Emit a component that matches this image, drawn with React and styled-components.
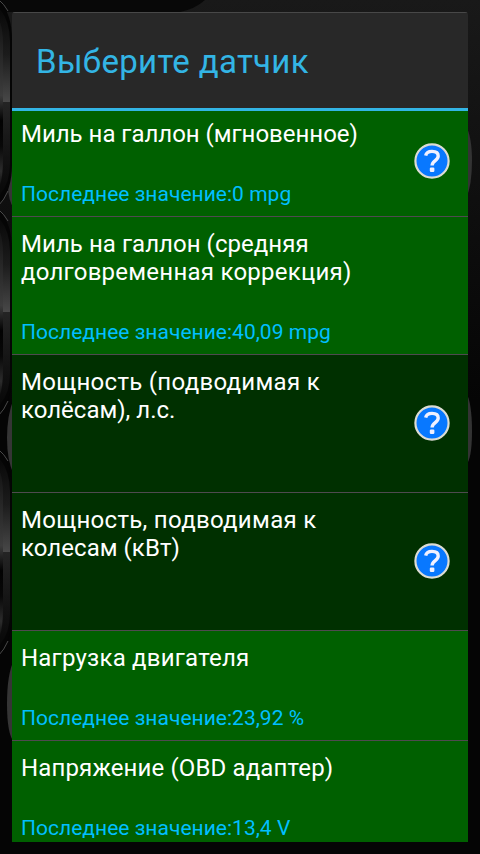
import React from 'react'
import styled, { createGlobalStyle } from 'styled-components'

const GlobalStyle = createGlobalStyle`
  * {
    box-sizing: border-box;
  }

  body {
    margin: 0;
    background: #050505;
    font-family: Roboto, 'Noto Sans', sans-serif;
    overflow: hidden;
  }
`

const Screen = styled.div`
  position: relative;
  width: 480px;
  height: 854px;
  padding: 12px;
  overflow: hidden;
`

const Backdrop = styled.svg`
  position: absolute;
  top: 0;
  left: 0;
`

const Dialog = styled.section`
  position: relative;
  display: flex;
  flex-direction: column;
  height: 830px;
  border-radius: 3px 3px 0 0;
  overflow: hidden;
`

const Header = styled.header`
  display: flex;
  align-items: center;
  flex: 0 0 99px;
  padding: 2px 24px 0;
  background: #282828;
  border-top: 1px solid #484848;
  border-bottom: 3px solid #33b5e5;
`

const Title = styled.h1`
  margin: 0;
  font-size: 33px;
  font-weight: 400;
  line-height: 40px;
  letter-spacing: 0.32px;
  color: #33b5e5;
  white-space: nowrap;
`

const List = styled.ul`
  flex: 1;
  min-height: 0;
  margin: 0;
  padding: 0;
  list-style: none;
  overflow: hidden;
`

const Row = styled.li`
  display: flex;
  align-items: center;
  height: ${(props) => (props.$tall ? '138px' : '110px')};
  padding: 13px 18px 0 9px;
  background: ${(props) => (props.$active ? '#006000' : '#003000')};
  border-bottom: 1px solid #4f4a4f;

  &:first-child {
    margin-top: -4px;
  }
`

const Sensor = styled.div`
  display: flex;
  flex-direction: column;
  justify-content: space-between;
  align-self: stretch;
  flex: 1;
  padding-bottom: 9px;
`

const NameLine = styled.div`
  font-size: 24px;
  line-height: 28px;
  letter-spacing: ${(props) => props.$spacing}px;
  color: #fff;
  white-space: nowrap;
`

const LastValue = styled.div`
  font-size: 21px;
  line-height: 26px;
  letter-spacing: 0.02px;
  color: #00bfff;
  white-space: nowrap;
`

const HelpButton = styled.button`
  display: flex;
  width: 36px;
  height: 36px;
  margin: 0 0 15px;
  padding: 0;
  background: none;
  border: 0;
`

const HelpIcon = () => (
  <svg width="36" height="36" viewBox="0 0 36 36">
    <circle cx="18" cy="18" r="16.6" fill="#0878ff" stroke="#dcdcd4" strokeWidth="2.2" />
    <path
      d="M11.7 12.6C12.2 9.8 14.6 8.4 18 8.4c3.7 0 6.2 1.7 6.2 4.7 0 4.6-6.1 4.5-6.1 9.5"
      fill="none"
      stroke="#f0f0ff"
      strokeWidth="3.4"
    />
    <rect x="15.8" y="24.6" width="4.6" height="4.4" rx="1.2" fill="#f0f0ff" />
  </svg>
)

// Dimmed dashboard with its gauge rims showing around the dialog
const Dashboard = () => (
  <Backdrop width="480" height="854" viewBox="0 0 480 854">
    <defs>
      <linearGradient id="top" x1="0" y1="0" x2="0" y2="1">
        <stop offset="0" stopColor="#191919" />
        <stop offset="1" stopColor="#050505" />
      </linearGradient>
      <linearGradient id="bezel" x1="0" y1="0" x2="0" y2="1">
        <stop offset="0" stopColor="#080808" />
        <stop offset="0.25" stopColor="#1c1c1c" />
        <stop offset="0.499" stopColor="#484848" />
        <stop offset="0.5" stopColor="#242424" />
        <stop offset="0.8" stopColor="#121212" />
        <stop offset="1" stopColor="#080808" />
      </linearGradient>
      <linearGradient id="face" x1="0" y1="0" x2="0" y2="1">
        <stop offset="0" stopColor="#141414" />
        <stop offset="0.45" stopColor="#3c3c3c" />
        <stop offset="0.6" stopColor="#020202" />
        <stop offset="0.75" stopColor="#080808" />
        <stop offset="0.9" stopColor="#2c2c2c" />
        <stop offset="1" stopColor="#0c0c0c" />
      </linearGradient>
    </defs>
    <rect width="480" height="400" fill="url(#top)" />
    <path d="M0 0H205Q195 9 180 12H0Z" fill="#080808" />
    <path d="M14 128Q8 148 8 185Q8 200 14 209Z" fill="#353535" />
    <path d="M14 398Q7 415 7 438T14 475Z" fill="#353535" />
    <path d="M14 660Q7 674 7 704T14 742Z" fill="#353535" />
    <path d="M466 126Q472 137 472 161T466 199Z" fill="#333" />
    <path d="M466 392Q472 403 472 431T466 465Z" fill="#333" />
    {[0, 210, 450].map((y) => (
      <g key={y}>
        <path
          d={`M-1 ${y}Q12 ${y + 14} 12 ${y + 40}V${y + 165}Q12 ${y + 190} -1 ${y + 205}Z`}
          fill="#050505"
        />
        <path
          d={`M-1 ${y + 8}Q10 ${y + 20} 10 ${y + 42}V${y + 163}Q10 ${y + 184} -1 ${y + 196}Z`}
          fill="url(#bezel)"
        />
        <path
          d={`M-1 ${y + 20}Q3 ${y + 28} 3 ${y + 45}V${y + 160}Q3 ${y + 178} -1 ${y + 188}Z`}
          fill="url(#face)"
        />
        <path
          d={`M-1 ${y}Q4 ${y + 4} 8 ${y + 11}M-1 ${y + 205}Q4 ${y + 200} 8 ${y + 191}`}
          fill="none"
          stroke="#4a4a4a"
        />
      </g>
    ))}
  </Backdrop>
)

const sensors = [
  {
    lines: [{ text: 'Миль на галлон (мгновенное)', spacing: -0.02 }],
    value: '0 mpg',
    help: true,
  },
  {
    lines: [
      { text: 'Миль на галлон (средняя', spacing: 0.05 },
      { text: 'долговременная коррекция)', spacing: 0.25 },
    ],
    value: '40,09 mpg',
  },
  {
    lines: [
      { text: 'Мощность (подводимая к', spacing: 0.3 },
      { text: 'колёсам), л.с.', spacing: 0 },
    ],
    help: true,
  },
  {
    lines: [
      { text: 'Мощность, подводимая к', spacing: 0.3 },
      { text: 'колесам (кВт)', spacing: 0.05 },
    ],
    help: true,
  },
  {
    lines: [{ text: 'Нагрузка двигателя', spacing: 0.22 }],
    value: '23,92 %',
  },
  {
    lines: [{ text: 'Напряжение (OBD адаптер)', spacing: 0.14 }],
    value: '13,4 V',
  },
]

const App = () => (
  <>
    <GlobalStyle />
    <Screen>
      <Dashboard />
      <Dialog>
        <Header>
          <Title>Выберите датчик</Title>
        </Header>
        <List>
          {sensors.map((sensor) => (
            <Row
              key={sensor.lines[0].text}
              $tall={sensor.lines.length > 1}
              $active={Boolean(sensor.value)}
            >
              <Sensor>
                <div>
                  {sensor.lines.map((line) => (
                    <NameLine key={line.text} $spacing={line.spacing}>
                      {line.text}
                    </NameLine>
                  ))}
                </div>
                {sensor.value && (
                  <LastValue>Последнее значение:{sensor.value}</LastValue>
                )}
              </Sensor>
              {sensor.help && (
                <HelpButton>
                  <HelpIcon />
                </HelpButton>
              )}
            </Row>
          ))}
        </List>
      </Dialog>
    </Screen>
  </>
)

export default App
